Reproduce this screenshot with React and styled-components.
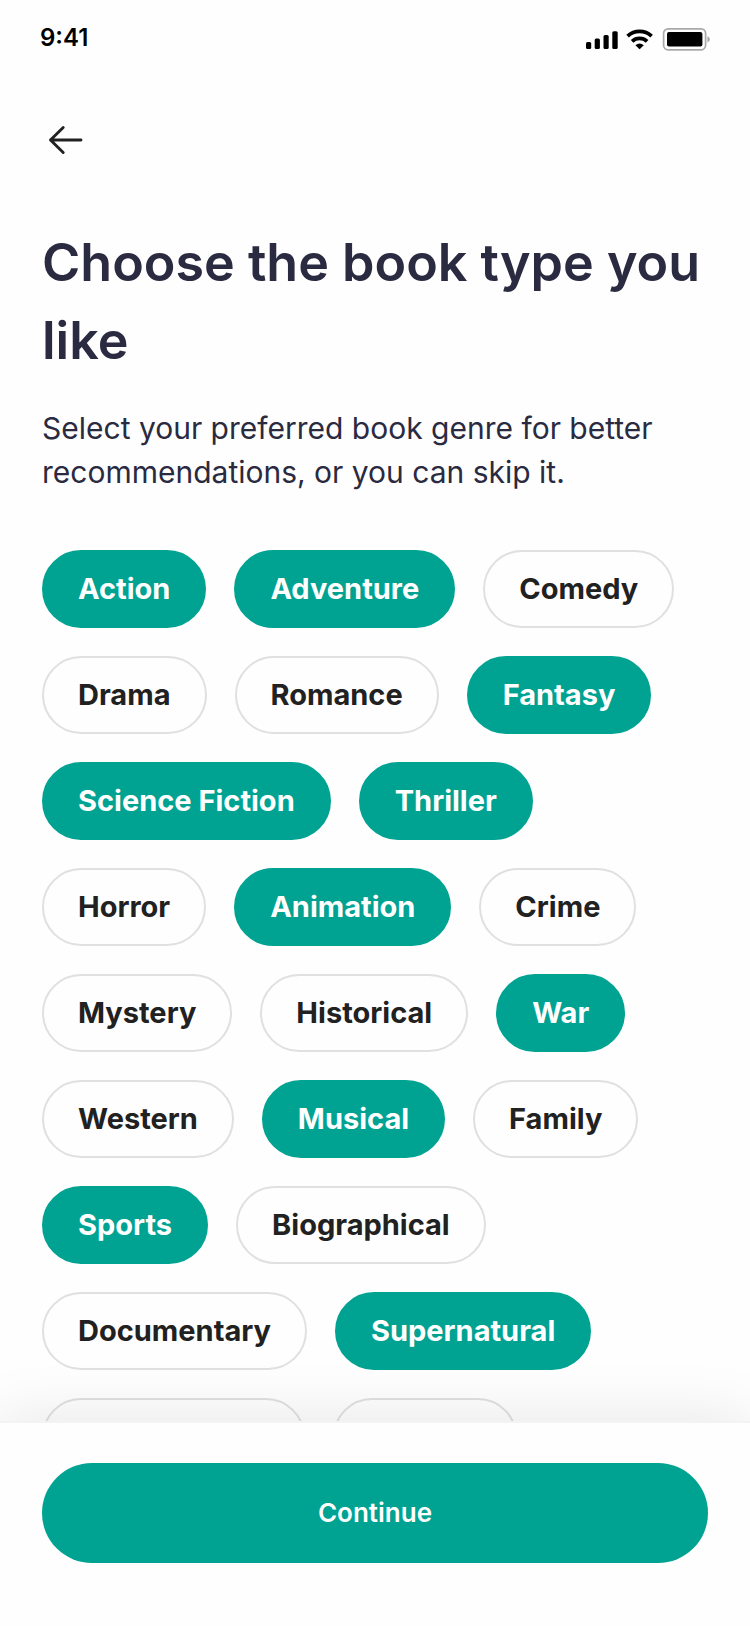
import React, { useState } from 'react';
import styled, { createGlobalStyle, css } from 'styled-components';

const GlobalStyle = createGlobalStyle`
  *, *::before, *::after {
    box-sizing: border-box;
  }

  body {
    margin: 0;
    background: #fefefe;
    font-family: Inter, "Liberation Sans", sans-serif;
    -webkit-font-smoothing: antialiased;
  }
`;

const Screen = styled.div`
  display: flex;
  flex-direction: column;
  height: 100vh;
  background: #fefefe;
`;

const StatusBar = styled.div`
  display: flex;
  align-items: center;
  justify-content: space-between;
  flex: none;
  height: 76px;
  padding: 0 40px;
  color: #000;
`;

const Clock = styled.time`
  font-size: 24px;
  font-weight: 600;
  line-height: 32px;
`;

const StatusIcons = styled.div`
  display: flex;
  align-items: center;
  gap: 8px;
`;

const Content = styled.main`
  flex: 1;
  min-height: 0;
  overflow-y: auto;
  scrollbar-width: none;
  padding: 40px 42px;
`;

const BackButton = styled.button`
  display: flex;
  width: 48px;
  height: 48px;
  padding: 0;
  border: 0;
  background: none;
  color: #212121;
  cursor: pointer;
`;

const Title = styled.h1`
  margin: 60px 0 26px;
  color: #2a2a40;
  font-size: 52px;
  font-weight: 600;
  line-height: 78px;
`;

const Intro = styled.p`
  margin: 0 0 56px;
  color: #2a2a40;
  font-size: 30px;
  font-weight: 400;
  line-height: 44px;
`;

const GenreList = styled.fieldset`
  display: flex;
  flex-wrap: wrap;
  gap: 28px;
  margin: 0;
  padding: 0;
  border: 0;
`;

const Chip = styled.label`
  display: flex;
  align-items: center;
  height: 78px;
  padding: 0 34px;
  border: 2px solid #e0e0e0;
  border-radius: 39px;
  color: #212121;
  font-size: 29px;
  font-weight: 700;
  line-height: 36px;
  white-space: nowrap;
  cursor: pointer;

  ${({ $selected }) =>
    $selected &&
    css`
      border-color: #00a392;
      background: #00a392;
      color: #fff;
    `}
`;

const ChipInput = styled.input`
  position: absolute;
  width: 1px;
  height: 1px;
  margin: 0;
  opacity: 0;
`;

const Footer = styled.footer`
  position: relative;
  flex: none;
  padding: 40px 42px 63px;
  border-top: 2px solid #f3f3f3;
  background: #fefefe;
  box-shadow: 0 0 60px rgba(0, 0, 0, 0.1);
`;

const ContinueButton = styled.button`
  display: block;
  width: 100%;
  height: 100px;
  border: 0;
  border-radius: 50px;
  background: #00a392;
  color: #fff;
  font-family: inherit;
  font-size: 26px;
  font-weight: 600;
  line-height: 32px;
  cursor: pointer;
`;

const SignalIcon = () => (
  <svg width="32" height="26" viewBox="0 0 32 26" fill="currentColor" aria-hidden="true">
    <rect x="0" y="17" width="5.2" height="7" rx="1.5" />
    <rect x="8.7" y="13.4" width="5.2" height="10.6" rx="1.5" />
    <rect x="17.5" y="10" width="5.2" height="14" rx="1.5" />
    <rect x="26.3" y="6.3" width="5.4" height="17.7" rx="1.5" />
  </svg>
);

const WifiIcon = () => (
  <svg width="28" height="26" viewBox="0 0 28 26" fill="none" stroke="currentColor" strokeWidth="3.8" aria-hidden="true">
    <path d="M1.6 11.2a17.6 17.6 0 0 1 24 0" />
    <path d="M6.1 16.4a11 11 0 0 1 15 0" />
    <path d="M9.4 20.3a6.6 6.6 0 0 1 8.4 0L13.6 24.2z" fill="currentColor" stroke="none" />
  </svg>
);

const BatteryIcon = () => (
  <svg width="48" height="26" viewBox="0 0 48 26" aria-hidden="true">
    <rect x="1.6" y="3.8" width="42" height="21" rx="4.5" fill="none" stroke="#a9a9a9" strokeWidth="1.7" />
    <rect x="5" y="7" width="35.4" height="14.4" rx="2" fill="#000" />
    <path d="M45.4 11.2c1.5.5 2.4 1.7 2.4 3.1s-.9 2.6-2.4 3.1z" fill="#a9a9a9" />
  </svg>
);

const ArrowLeftIcon = () => (
  <svg width="48" height="48" viewBox="0 0 48 48" fill="none" stroke="currentColor" strokeWidth="2.9" strokeLinecap="round" strokeLinejoin="round" aria-hidden="true">
    <path d="M39 24H8.5M21.2 11.5 8.5 24l12.7 12.5" />
  </svg>
);

const GENRES = [
  'Action', 'Adventure', 'Comedy', 'Drama', 'Romance', 'Fantasy',
  'Science Fiction', 'Thriller', 'Horror', 'Animation', 'Crime',
  'Mystery', 'Historical', 'War', 'Western', 'Musical', 'Family',
  'Sports', 'Biographical', 'Documentary', 'Supernatural',
  'Philosophical', 'Medical',
];

const INITIAL = [
  'Action', 'Adventure', 'Fantasy', 'Science Fiction', 'Thriller',
  'Animation', 'War', 'Musical', 'Sports', 'Supernatural',
];

function GenreChip({ name, selected, onToggle }) {
  return (
    <Chip $selected={selected}>
      <ChipInput type="checkbox" checked={selected} onChange={() => onToggle(name)} />
      {name}
    </Chip>
  );
}

export default function App() {
  const [chosen, setChosen] = useState(INITIAL);

  const toggle = (name) =>
    setChosen((list) =>
      list.includes(name) ? list.filter((n) => n !== name) : [...list, name]
    );

  return (
    <>
      <GlobalStyle />
      <Screen>
        <StatusBar>
          <Clock>9:41</Clock>
          <StatusIcons>
            <SignalIcon />
            <WifiIcon />
            <BatteryIcon />
          </StatusIcons>
        </StatusBar>
        <Content>
          <BackButton type="button" aria-label="Back">
            <ArrowLeftIcon />
          </BackButton>
          <Title>Choose the book type you like</Title>
          <Intro>
            Select your preferred book genre for better recommendations, or you
            can skip it.
          </Intro>
          <GenreList aria-label="Book genres">
            {GENRES.map((name) => (
              <GenreChip
                key={name}
                name={name}
                selected={chosen.includes(name)}
                onToggle={toggle}
              />
            ))}
          </GenreList>
        </Content>
        <Footer>
          <ContinueButton type="button">Continue</ContinueButton>
        </Footer>
      </Screen>
    </>
  );
}
